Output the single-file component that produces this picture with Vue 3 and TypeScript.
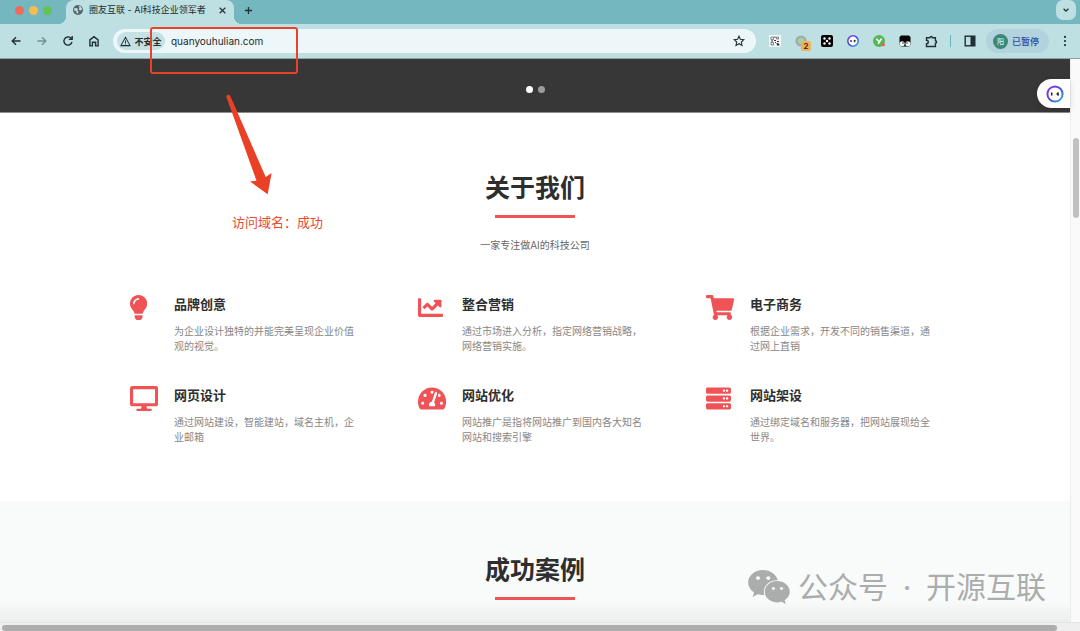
<script setup lang="ts">
import { ref } from 'vue'

interface Service {
  title: string
  text: string
  width: number
  path: string
}

const address = ref('quanyouhulian.com')
const slide = ref(0)

const serverRow = (y: number): string =>
  `M480 ${y + 128}H32c-17.673 0-32-14.327-32-32V${y + 32}c0-17.673 14.327-32 32-32h448c17.673 0 32 14.327 32 32v64c0 17.673-14.327 32-32 32z` +
  'm-48-88c-13.255 0-24 10.745-24 24s10.745 24 24 24 24-10.745 24-24-10.745-24-24-24z' +
  'm-64 0c-13.255 0-24 10.745-24 24s10.745 24 24 24 24-10.745 24-24-10.745-24-24-24z'

const services: Service[] = [
  {
    title: '品牌创意',
    text: '为企业设计独特的并能完美呈现企业价值观的视觉。',
    width: 352,
    path: 'M96.06 454.35c.01 6.29 1.87 12.45 5.36 17.69l17.09 25.69a31.99 31.99 0 0 0 26.64 14.28h61.71a31.99 31.99 0 0 0 26.64-14.28l17.09-25.69a31.989 31.989 0 0 0 5.36-17.69l.04-38.35H96.01l.05 38.35zM0 176c0 44.37 16.45 84.85 43.56 115.78 16.52 18.85 42.36 58.23 52.21 91.45.04.26.07.52.11.78h160.24c.04-.26.07-.51.11-.78 9.85-33.22 35.69-72.6 52.21-91.45C335.55 260.85 352 220.37 352 176 352 78.61 272.91-.3 175.45 0 73.44.31 0 82.97 0 176zm176-80c-44.11 0-80 35.89-80 80 0 8.84-7.16 16-16 16s-16-7.16-16-16c0-61.76 50.24-112 112-112 8.84 0 16 7.16 16 16s-7.16 16-16 16z',
  },
  {
    title: '整合营销',
    text: '通过市场进入分析，指定网络营销战略，网络营销实施。',
    width: 512,
    path: 'M496 384H64V80c0-8.84-7.16-16-16-16H16C7.16 64 0 71.16 0 80v336c0 17.67 14.33 32 32 32h464c8.84 0 16-7.16 16-16v-32c0-8.84-7.16-16-16-16zM464 96H345.94c-21.38 0-32.09 25.85-16.97 40.97l32.4 32.4L288 242.75l-73.37-73.37c-12.5-12.5-32.76-12.5-45.25 0l-68.69 68.69c-6.25 6.25-6.25 16.38 0 22.63l22.62 22.62c6.25 6.25 16.38 6.25 22.63 0L192 237.25l73.37 73.37c12.5 12.5 32.76 12.5 45.25 0l96-96 32.4 32.4c15.12 15.12 40.97 4.41 40.97-16.97V112c.01-8.84-7.15-16-15.99-16z',
  },
  {
    title: '电子商务',
    text: '根据企业需求，开发不同的销售渠道，通过网上直销',
    width: 576,
    path: 'M528.12 301.319l47.273-208C578.806 78.301 567.391 64 551.99 64H159.208l-9.166-44.81C147.758 8.021 137.93 0 126.529 0H24C10.745 0 0 10.745 0 24v16c0 13.255 10.745 24 24 24h69.883l70.248 343.435C147.325 417.1 136 435.222 136 456c0 30.928 25.072 56 56 56s56-25.072 56-56c0-15.674-6.447-29.835-16.824-40h209.647C430.447 426.165 424 440.326 424 456c0 30.928 25.072 56 56 56s56-25.072 56-56c0-22.172-12.888-41.332-31.579-50.405l5.517-24.276c3.413-15.018-8.002-29.319-23.403-29.319H218.117l-6.545-32h293.145c11.206 0 20.92-7.754 23.403-18.681z',
  },
  {
    title: '网页设计',
    text: '通过网站建设，智能建站，域名主机，企业邮箱',
    width: 576,
    path: 'M528 0H48C21.5 0 0 21.5 0 48v320c0 26.5 21.5 48 48 48h192l-16 48h-72c-13.3 0-24 10.7-24 24s10.7 24 24 24h272c13.3 0 24-10.7 24-24s-10.7-24-24-24h-72l-16-48h192c26.5 0 48-21.5 48-48V48c0-26.5-21.5-48-48-48zm-16 352H64V64h448v288z',
  },
  {
    title: '网站优化',
    text: '网站推广是指将网站推广到国内各大知名网站和搜索引擎',
    width: 576,
    path: 'M288 32C128.94 32 0 160.94 0 320c0 52.8 14.25 102.26 39.06 144.8 5.61 9.62 16.3 15.2 27.44 15.2h443c11.14 0 21.83-5.58 27.44-15.2C561.75 422.26 576 372.8 576 320c0-159.06-128.94-288-288-288zm0 64c14.71 0 26.58 10.13 30.32 23.65-1.11 2.26-2.64 4.23-3.45 6.67l-9.22 27.67c-5.13 3.49-10.97 6.01-17.64 6.01-17.67 0-32-14.33-32-32S270.33 96 288 96zM96 384c-17.67 0-32-14.33-32-32s14.33-32 32-32 32 14.33 32 32-14.33 32-32 32zm48-160c-17.67 0-32-14.33-32-32s14.33-32 32-32 32 14.33 32 32-14.33 32-32 32zm246.77-72.41l-61.33 184C343.13 347.33 352 364.54 352 384c0 11.72-3.38 22.55-8.88 32H232.88c-5.5-9.45-8.88-20.28-8.88-32 0-33.94 26.5-61.43 59.9-63.59l61.34-184.01c4.17-12.56 17.73-19.45 30.36-15.17 12.57 4.19 19.35 17.79 15.17 30.36zm14.66 57.2l15.52-46.55c3.47-1.29 7.13-2.23 11.05-2.23 17.67 0 32 14.33 32 32s-14.33 32-32 32c-11.38-.01-20.89-6.28-26.57-15.22zM480 384c-17.67 0-32-14.33-32-32s14.33-32 32-32 32 14.33 32 32-14.33 32-32 32z',
  },
  {
    title: '网站架设',
    text: '通过绑定域名和服务器，把网站展现给全世界。',
    width: 512,
    path: serverRow(32) + serverRow(192) + serverRow(352),
  },
]
</script>

<template>
  <div class="window">
    <header class="tabstrip">
      <div class="lights">
        <button class="light red" aria-label="关闭窗口"></button>
        <button class="light yellow" aria-label="最小化"></button>
        <button class="light green" aria-label="全屏"></button>
      </div>
      <div class="tab">
        <svg class="favicon" viewBox="0 0 24 24" aria-hidden="true">
          <circle cx="12" cy="12" r="12" fill="#55666b" />
          <path d="M3 8l6-1 3 3-2 3 3 2-1 6-3-1-1-5-5-2zM13 2l5 1 4 7-3 3-4-1-1-3 2-2z" fill="#bfe0e3" />
        </svg>
        <span class="tab-title">圈友互联 - AI科技企业领军者</span>
        <button class="tab-close" aria-label="关闭标签页">
          <svg viewBox="0 0 10 10" width="7" height="7"><path d="M1 1l8 8M9 1L1 9" stroke="#26363a" stroke-width="1.8" /></svg>
        </button>
      </div>
      <button class="new-tab" aria-label="新标签页">
        <svg viewBox="0 0 10 10" width="9" height="9"><path d="M5 1v8M1 5h8" stroke="#1e3338" stroke-width="1.5" /></svg>
      </button>
      <button class="tab-search" aria-label="搜索标签页">
        <svg viewBox="0 0 10 10" width="8" height="8"><path d="M2 3.5l3 3 3-3" fill="none" stroke="#1e2d30" stroke-width="1.6" /></svg>
      </button>
    </header>

    <nav class="toolbar" aria-label="浏览器工具栏">
      <button class="tool" aria-label="后退">
        <svg viewBox="0 0 12 12" width="12" height="12"><path d="M10.500 6H2M6 2.200L2.200 6 6 9.800" class="line" /></svg>
      </button>
      <button class="tool faded" aria-label="前进">
        <svg viewBox="0 0 12 12" width="12" height="12"><path d="M1.500 6H10M6 2.200L9.800 6 6 9.800" class="line" /></svg>
      </button>
      <button class="tool" aria-label="重新加载">
        <svg viewBox="0 0 12 12" width="12" height="12"><path d="M10 7a4.1 4.1 0 1 1-1.2-4L10 4.200M10.200 1v3.400H6.800" class="line" /></svg>
      </button>
      <button class="tool" aria-label="主页">
        <svg viewBox="0 0 12 12" width="12" height="12"><path d="M1.900 4.900L6 1.600l4.100 3.300v6H7.600V7.200H4.400v3.700H1.900z" class="line" /></svg>
      </button>

      <form class="omnibox" @submit.prevent>
        <button type="button" class="security">
          <svg viewBox="0 0 12 12" width="11" height="11"><path d="M6 1.500L11 10.500H1zM6 5v2.500M6 8.300v1.100" class="line thin" /></svg>
          <span>不安全</span>
        </button>
        <input v-model="address" class="address" type="text" aria-label="地址栏" spellcheck="false" />
        <button type="button" class="tool star" aria-label="添加书签">
          <svg viewBox="0 0 12 12" width="12" height="12"><path d="M6 1.200l1.400 3.100 3.400.4-2.500 2.300.7 3.400L6 8.700l-3 1.700.7-3.400L1.200 4.700l3.400-.4z" class="line thin" /></svg>
        </button>
      </form>

      <div class="extensions">
        <button class="tool" aria-label="二维码">
          <svg viewBox="0 0 12 12" width="12" height="12">
            <rect width="12" height="12" rx="1" fill="#f4f8f8" />
            <path d="M2 2h2.500v2.500H2zM7.500 2h2v2h-2zM2 7.500h2.500V10H2z" fill="none" stroke="#555" stroke-width=".7" />
            <path d="M5.500 1.500h1v1.500h-1zM5 5h2v1H5zM8 6h2v1H8zM6 7h1v1H6zM7.500 8h1.500l1.500 1.500V10.500H8zM2 5.500h2v1H2z" fill="#333" />
          </svg>
        </button>
        <button class="tool badge-host" aria-label="扩展程序，2 条提醒">
          <svg viewBox="0 0 12 12" width="12" height="12"><circle cx="6" cy="6" r="4.400" fill="#a5d3a0" stroke="#a3aaaa" stroke-width="2.400" /></svg>
          <span class="badge">2</span>
        </button>
        <button class="tool" aria-label="骰子扩展">
          <svg viewBox="0 0 12 12" width="12" height="12">
            <rect width="12" height="12" rx="2" fill="#050505" />
            <g fill="#fff"><circle cx="3.500" cy="3.500" r="1.200" /><circle cx="8.500" cy="3.500" r="1.200" /><circle cx="6" cy="6" r="1.200" /><circle cx="3.500" cy="8.500" r="1.200" /><circle cx="8.500" cy="8.500" r="1.200" /></g>
          </svg>
        </button>
        <button class="tool" aria-label="助手扩展">
          <svg viewBox="0 0 18 18" width="12" height="12">
            <circle cx="9" cy="9" r="7.800" fill="#fff" stroke="url(#ring)" stroke-width="2.400" />
            <path d="M6 7.500v3M12.500 7.500L11 9l1.500 1.500" fill="none" stroke="#222" stroke-width="2" />
          </svg>
        </button>
        <button class="tool" aria-label="翻译扩展">
          <svg viewBox="0 0 12 12" width="12" height="12">
            <circle cx="6" cy="6" r="6" fill="#55b856" />
            <path d="M3.300 3.800L5.700 6.300M8.600 3.500L5.200 8.800" stroke="#fff" stroke-width="1.600" />
            <circle cx="10.300" cy="9.700" r="1.600" fill="#ee5c4c" />
          </svg>
        </button>
        <button class="tool" aria-label="脚本扩展">
          <svg viewBox="0 0 12 12" width="12" height="12">
            <path d="M2 .5h8l1.500 1.500V9.500L10 11.500H2L.5 9.500V2z" fill="#050505" />
            <circle cx="3.100" cy="8.700" r="2.500" fill="#f3f8f8" /><circle cx="8.900" cy="8.700" r="2.500" fill="#f3f8f8" />
            <circle cx="4" cy="8" r=".7" /><circle cx="8" cy="8" r=".7" />
          </svg>
        </button>
        <button class="tool" aria-label="扩展程序">
          <svg viewBox="0 0 13 13" width="13" height="13"><path d="M1.500 2.800h3.300a1.300 1.300 0 0 1 2.600 0h3v3a1.200 1.200 0 0 1 0 2.400v3.300h-8.900V8.800a1.800 1.800 0 0 0 0-3.600z" class="line" /></svg>
        </button>
      </div>
      <span class="divider"></span>
      <button class="tool" aria-label="侧边栏">
        <svg viewBox="0 0 12 12" width="12" height="12"><rect x="1.200" y="1.200" width="9.600" height="9.600" class="line" /><path d="M6.500 1h4.300v10H6.500z" fill="#1f2f33" /></svg>
      </button>
      <button class="profile">
        <span class="avatar">阳</span>
        <span>已暂停</span>
      </button>
      <button class="tool" aria-label="更多">
        <svg viewBox="0 0 12 12" width="12" height="12" fill="#1f2f33"><circle cx="6" cy="1.900" r="1.100" /><circle cx="6" cy="6" r="1.100" /><circle cx="6" cy="10.100" r="1.100" /></svg>
      </button>
    </nav>

    <div class="viewport">
      <main class="page">
        <section class="hero" aria-label="轮播">
          <button
            v-for="n in 2"
            :key="n"
            class="dot"
            :class="{ active: slide === n - 1 }"
            :aria-label="`第 ${n} 张`"
            @click="slide = n - 1"
          ></button>
          <button class="assistant" aria-label="助手">
            <svg viewBox="0 0 18 18" width="18" height="18">
              <defs>
                <linearGradient id="ring" x1="0" y1="0" x2="1" y2="1">
                  <stop offset="0" stop-color="#8a3ff0" /><stop offset=".5" stop-color="#4a45e2" /><stop offset="1" stop-color="#35b3e8" />
                </linearGradient>
              </defs>
              <circle cx="9" cy="9" r="7.600" fill="#fff" stroke="url(#ring)" stroke-width="2" />
              <path d="M5.700 7.500v3M12.600 7.500L11.300 9l1.300 1.500" fill="none" stroke="#222" stroke-width="1.600" />
            </svg>
          </button>
        </section>

        <section class="about">
          <h2>关于我们</h2>
          <p class="lead">一家专注做AI的科技公司</p>
          <div class="services">
            <article v-for="item in services" :key="item.title" class="service">
              <div class="icon">
                <svg :viewBox="`0 0 ${item.width} 512`" height="25" fill="#ef5356" aria-hidden="true"><path :d="item.path" /></svg>
              </div>
              <div class="copy">
                <h3>{{ item.title }}</h3>
                <p>{{ item.text }}</p>
              </div>
            </article>
          </div>
        </section>

        <section class="cases">
          <h2>成功案例</h2>
        </section>
      </main>
      <div class="vscroll"><span class="vthumb"></span></div>
    </div>
    <div class="hscroll"><span class="hthumb"></span></div>

    <span class="mark-box"></span>
    <svg class="mark-arrow" viewBox="0 0 48 102" width="48" height="102" aria-hidden="true">
      <path d="M1.500 3.200C1 1 4.400-.2 5.300 2L40.700 83l5.900-4-3.900 21.300L25 87.500l6.500-.8z" fill="#ea4026" />
    </svg>
    <p class="mark-note">访问域名：成功</p>

    <div class="watermark">
      <svg viewBox="13 32 550 449" width="42" height="34" aria-hidden="true">
        <path fill="#abadac" d="M385.2 167.6c6.400 0 12.600.3 18.800 1.100C387.400 90.300 303.300 32 207.700 32 100.500 32 13 104.800 13 197.400c0 53.400 29.300 97.500 77.900 131.600l-19.300 58.600 68-34.100c24.400 4.800 43.800 9.700 68.200 9.700 6.200 0 12.100-.3 18.300-.8-4-12.900-6.200-26.600-6.200-40.800-.1-84.900 72.900-154 165.300-154zm-104.500-52.900c14.500 0 24.200 9.700 24.200 24.400 0 14.500-9.700 24.200-24.200 24.200-14.800 0-29.300-9.700-29.300-24.200.1-14.700 14.600-24.400 29.300-24.400zm-136.400 48.600c-14.500 0-29.300-9.700-29.300-24.200 0-14.800 14.800-24.400 29.300-24.400 14.800 0 24.400 9.700 24.400 24.400 0 14.600-9.600 24.200-24.400 24.200zM563 319.400c0-77.900-77.900-141.300-165.400-141.300-92.700 0-165.400 63.400-165.400 141.300S305 460.700 397.600 460.700c19.300 0 38.900-5.100 58.600-9.900l53.400 29.300-14.800-48.600C534 402.100 563 363.200 563 319.400zm-219.100-24.500c-9.500 0-19.300-9.700-19.300-19.600 0-9.700 9.700-19.300 19.300-19.300 14.800 0 24.400 9.700 24.400 19.300 0 10-9.700 19.600-24.400 19.600zm107.100 0c-9.500 0-19.300-9.700-19.300-19.600 0-9.700 9.700-19.300 19.300-19.300 14.500 0 24.400 9.700 24.400 19.300.1 10-9.900 19.600-24.400 19.600z" />
      </svg>
      <span>公众号</span><span class="middot">·</span><span>开源互联</span>
    </div>
  </div>
</template>

<style>
body {
  margin: 0;
}
</style>

<style scoped>
.window {
  position: relative;
  display: flex;
  flex-direction: column;
  min-height: 100vh;
  overflow: hidden;
  background: #fff;
  font-family: Inter, 'Noto Sans CJK SC', sans-serif;
  color: #2e2e2e;
}
button {
  display: flex;
  align-items: center;
  justify-content: center;
  padding: 0;
  border: 0;
  background: none;
  font: inherit;
  color: inherit;
}
h2,
h3,
p {
  margin: 0;
}
svg {
  flex: none;
}
.line {
  fill: none;
  stroke: #1f2f33;
  stroke-width: 1.4;
}
.thin {
  stroke-width: 1.1;
}

/* tab strip */
.tabstrip {
  display: flex;
  height: 24px;
  background: #74b7be;
}
.lights {
  display: flex;
  align-items: center;
  gap: 5px;
  height: 20px;
  padding: 0 13px 0 15px;
}
.light {
  width: 9px;
  height: 9px;
  border-radius: 50%;
}
.red {
  background: #ee6a5f;
}
.yellow {
  background: #f5bd4f;
}
.green {
  background: #61c454;
}
.tab {
  position: relative;
  display: flex;
  align-items: center;
  box-sizing: border-box;
  width: 168px;
  margin-left: 1px;
  padding: 0 7px 4px;
  border-radius: 8px 8px 0 0;
  background: #bfe0e3;
  font-size: 9px;
  line-height: 14px;
  color: #1d2b2e;
}
.tab::before,
.tab::after {
  content: '';
  position: absolute;
  bottom: 0;
  width: 8px;
  height: 8px;
}
.tab::before {
  right: 100%;
  background: radial-gradient(circle at 0 0, #74b7be 8px, #bfe0e3 8px);
}
.tab::after {
  left: 100%;
  background: radial-gradient(circle at 100% 0, #74b7be 8px, #bfe0e3 8px);
}
.favicon {
  width: 10px;
  height: 10px;
  margin-right: 6px;
}
.tab-title {
  flex: 1;
  white-space: nowrap;
}
.tab-close {
  width: 9px;
  height: 14px;
}
.new-tab {
  width: 28px;
  height: 20px;
}
.tab-search {
  width: 20px;
  height: 20px;
  margin: 0 4px 0 auto;
  border-radius: 7px;
  background: #bfe0e3;
}

/* toolbar */
.toolbar {
  display: flex;
  align-items: center;
  height: 34px;
  padding: 0 2px 0 3px;
  border-bottom: 1px solid #8da3a6;
  background: #bfe0e3;
}
.tool {
  width: 26px;
  height: 24px;
}
.faded {
  opacity: 0.45;
}
.omnibox {
  display: flex;
  flex: 1;
  align-items: center;
  box-sizing: border-box;
  height: 24px;
  margin: 0 6px;
  padding: 0 4px;
  border-radius: 12px;
  background: #edf7f9;
}
.security {
  gap: 3px;
  width: 48px;
  height: 18px;
  border-radius: 9px;
  background: #c5e1e4;
  font-size: 9px;
  font-weight: 600;
  color: #1f2f33;
}
.address {
  flex: 1;
  min-width: 0;
  height: 20px;
  padding: 0 6px;
  border: 0;
  outline: 0;
  background: none;
  font: inherit;
  font-size: 10px;
  color: #202a2c;
}
.extensions {
  display: flex;
}
.badge-host {
  position: relative;
}
.badge {
  position: absolute;
  right: 3px;
  bottom: 2px;
  width: 10px;
  height: 10px;
  border-radius: 2px;
  background: #eeb15c;
  font-size: 8px;
  font-weight: 600;
  line-height: 10px;
  color: #2b2415;
}
.divider {
  width: 1px;
  height: 12px;
  margin: 0 6px;
  background: #63b5bd;
}
.profile {
  gap: 4px;
  width: 63px;
  height: 24px;
  margin: 0 3px;
  padding-right: 3px;
  border-radius: 12px;
  background: #b2d2dd;
  font-size: 9px;
  font-weight: 500;
  color: #2a4b9c;
}
.avatar {
  width: 15px;
  height: 15px;
  border-radius: 50%;
  background: #3c8877;
  font-size: 7px;
  line-height: 15px;
  color: #d9ece8;
}

/* web page */
.viewport {
  display: flex;
  flex: 1;
}
.page {
  display: flex;
  flex: 1;
  flex-direction: column;
}
.hero {
  position: relative;
  display: flex;
  justify-content: center;
  gap: 5px;
  box-sizing: border-box;
  height: 54px;
  padding-top: 27px;
  border-bottom: 1px solid #8d8d8d;
  background: #373737;
}
.dot {
  width: 7px;
  height: 7px;
  border-radius: 50%;
  background: #9b9b9b;
}
.dot.active {
  background: #fff;
}
.assistant {
  position: absolute;
  top: 20px;
  right: 0;
  width: 33px;
  height: 29px;
  padding-left: 2px;
  border-radius: 15px 0 0 15px;
  background: #fff;
  box-shadow: 0 2px 6px rgba(0, 0, 0, 0.12);
}
h2 {
  font-size: 25px;
  font-weight: 600;
  line-height: 36px;
  text-align: center;
}
h2::after {
  content: '';
  display: block;
  width: 80px;
  height: 3px;
  margin: 9px auto 0;
  background: #ef5356;
}
.about {
  padding: 57px 24px 56px;
}
.lead {
  margin-top: 19px;
  font-size: 10px;
  line-height: 16px;
  text-align: center;
  color: #666;
}
.services {
  display: grid;
  grid-template-columns: repeat(3, 1fr);
  gap: 32px 54px;
  max-width: 810px;
  margin: 42px auto 0;
}
.service {
  display: flex;
}
.icon {
  flex: none;
  width: 44px;
}
.icon svg {
  display: block;
}
.copy {
  padding-right: 6px;
}
h3 {
  font-size: 13px;
  font-weight: 600;
  line-height: 18px;
}
.copy p {
  margin-top: 11px;
  font-size: 10px;
  line-height: 15px;
  color: #878787;
}
.cases {
  flex: 1;
  padding: 51px 24px 16px;
  background: linear-gradient(to top, rgba(0, 0, 0, 0.05), transparent 22px) #f8fbfa;
}

/* scroll bars */
.vscroll {
  box-sizing: border-box;
  width: 10px;
  padding: 79px 1px 0 2px;
  border-left: 1px solid #ebebeb;
  background: #fafafa;
}
.vthumb {
  display: block;
  height: 80px;
  border-radius: 3px;
  background: #c1c1c1;
}
.hscroll {
  box-sizing: border-box;
  height: 9px;
  padding: 2px 23px 0 2px;
  border-top: 1px solid #e4e4e4;
  background: #efefef;
}
.hthumb {
  display: block;
  height: 6px;
  border-radius: 3px;
  background: #adadad;
}

/* annotations laid over the window */
.mark-box {
  position: absolute;
  top: 27px;
  left: 150px;
  box-sizing: border-box;
  width: 148px;
  height: 47px;
  border: 2px solid #ea4228;
  border-radius: 3px;
}
.mark-arrow {
  position: absolute;
  top: 94px;
  left: 225px;
}
.mark-note {
  position: absolute;
  top: 212px;
  left: 232px;
  font-size: 13px;
  line-height: 20px;
  color: #ea4a30;
}
.watermark {
  position: absolute;
  right: 34px;
  bottom: 24px;
  display: flex;
  align-items: center;
  font-size: 30px;
  line-height: 40px;
  color: #abadac;
}
.watermark svg {
  margin-right: 8px;
}
.middot {
  width: 38px;
  text-align: center;
}
</style>
